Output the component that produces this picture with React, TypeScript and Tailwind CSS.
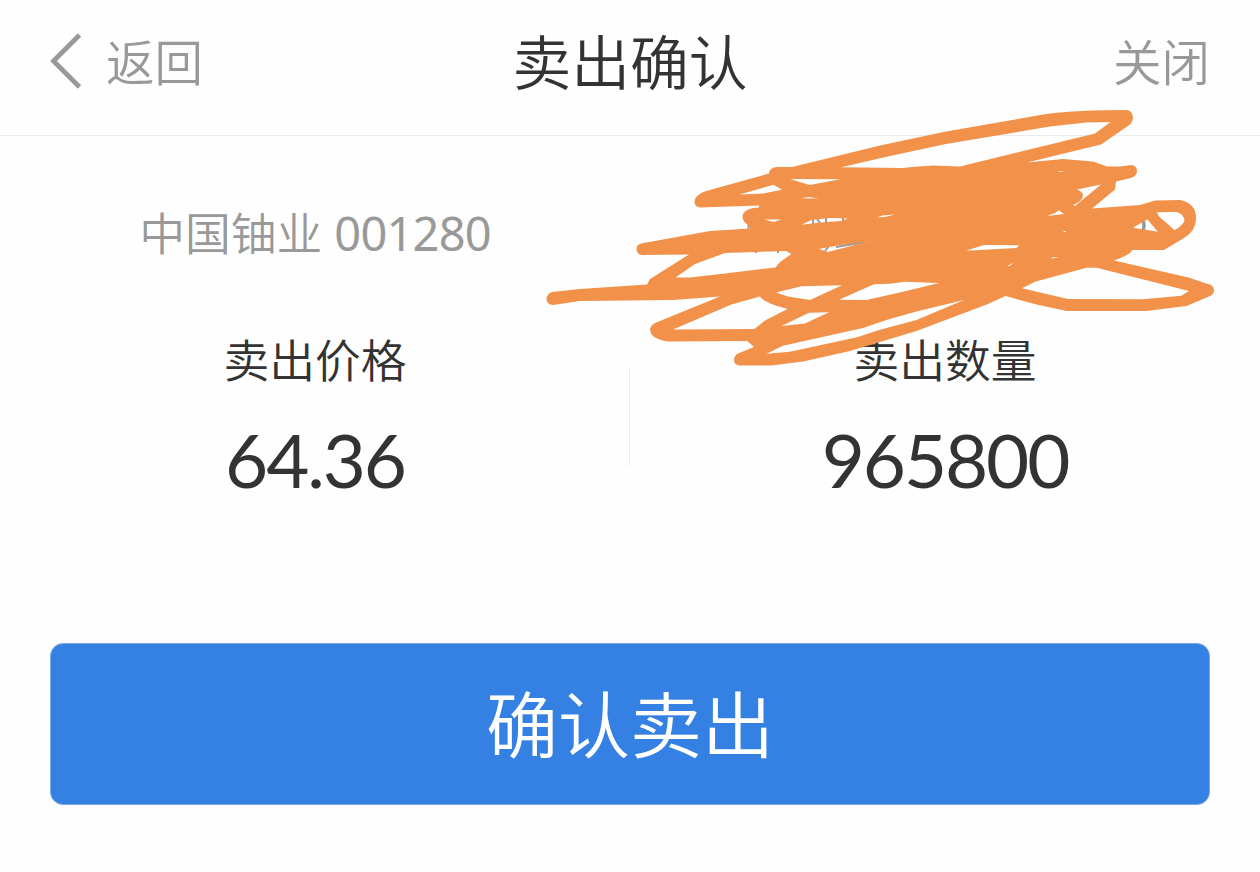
interface TradeFieldProps {
  label: string;
  value: string;
}

const SCRIBBLE_OUTLINE =
  "M694.5 202 Q694.5 195 706 191 L769 173.5 Q770 167 777 167 L792 167 L880 145.5 L946 131.5 L1046 114 Q1078 110 1127 110 Q1133 111 1133 118.5 Q1132 123 1130 124.5 L1101 144.5 L1027 162.5 L1063 159 L1093 161.5 L1107 166.5 L1120 166.5 L1131 165 Q1137 165.5 1137 171 Q1137 176 1131 178 L1116 181.5 L1115 189.5 L1092 208.5 L1140 205 L1155 200.5 L1180 200 Q1196 203 1196 218.5 Q1196 231 1184 238 L1164 250 L1132 250 Q1132 254 1114 260.5 L1188.5 277.5 L1208 284 Q1214 285 1214 290.5 Q1214 294.5 1209 296.5 L1186.5 306 L1146.5 311 L1066.5 311 L1036.5 304.5 L1005.5 296 L988 304 L916.5 331 L880 342 L850 351 L803 361.5 L771.5 365.5 L740 365.5 Q734 365 734 360 Q734 355.5 738 353.5 L754 347 L747 341 L668 341.5 Q650 339 650 329 Q651 325 655 323 L720 296.5 L673 300 L580 301 L553 305 Q546.5 304.5 546.5 299 Q547 293.5 552 292 L580 289 L647 284.5 L650 279 L689 254.5 L641.5 255 Q636.5 254 636.5 249 Q636.5 244.5 641 243.5 L710 231 L750.5 228.5 L748 225 Q742 221 742.5 216 Q744 208 759 207.5 L759 205.5 L700 207.5 Q694.5 206.5 694.5 202 Z";

// Gaps left open between the pen strokes.
const SCRIBBLE_GAPS = [
  "M841 167.3 L890 156 L946 144 L1050 126.5 L1086 122.5 L1110.5 122 L1095 133.5 L960 166.5 L933 165.5 L912 167 L903 168 Z",
  "M739.5 194.5 L773.5 184.7 L782 189.7 L763 193.5 Z",
  "M790 179 L840.5 179.3 L809.5 185 Z",
  "M801.5 198.3 L809 197 L818.5 198.5 Z",
  "M764 219.5 L781.5 219.5 L773.5 222 Z",
  "M801.5 224.7 L811.5 220 L830 218 L848 218.5 L841 221 L820 222.5 Z",
  "M877 217.5 L882 215.5 L895 214.5 L886 216.7 Z",
  "M819 249 L838 245.5 L868 241.5 L828 252 Z",
  "M675.5 277.5 L695 264 L725 253 L786 251 L791.5 254 L780 262 L775.5 267.5 L725 273.5 L690 277.5 Z",
  "M673 329.5 L731.5 304.5 L760 296.5 Q764 303 787.5 309 L765 320.5 L754.5 329 Z",
  "M776 292.5 L801.5 286.3 L842 285.3 L810 300 L788 296.5 Z",
  "M839 299.7 L874 284.3 L890 283.7 L905 281.7 L939 283 L903 291.7 L866.5 300 Z",
  "M781.5 326 L809 312.7 L829 312.3 L805 323.5 Z",
  "M766.5 353.7 L783 345.7 L863 328 L888 319.5 L916.5 311.5 L964 300 L916.5 320 L880 329.7 L857 337.3 L790 351.7 Z",
  "M966 250.7 L984 245 L1019 245.3 L1016.5 248 Z",
  "M1022 288.3 L1035 281.7 L1086.5 267.7 L1096.5 267.7 L1136.5 277.7 L1189 291 L1181.5 295.7 L1143 299.3 L1068 299 Z",
  "M1077 189.5 L1101 184.5 L1075 206 L1073 205 Q1083 201 1083 195 Q1082 191 1077 189.5 Z",
  "M1046.7 216 L1055 213 L1059 210.3 L1064 214 Z",
  "M1133 227.7 L1147.5 219.3 L1152 225 L1158 231.7 Z",
  "M1157 212.3 L1176.5 212 Q1184 214 1184.5 221 Q1182 226 1174.5 230.3 L1165 221.5 Q1158 217 1157 212.3 Z",
  "M1058 172 L1060 171 L1065 171.5 Z",
  "M1007 266 L1015 262 L1009 266 Z",
  "M1050 258.5 L1054 257 L1059 257.5 Z",
  "M1063 231 L1066 231 L1065 232.5 Z",
];

function TradeField({ label, value }: TradeFieldProps) {
  return (
    <div className="flex w-1/2 flex-col items-center">
      <span className="text-[45.8px] leading-[60px] font-[350]">{label}</span>
      <span className="mt-[29px] font-['Lato'] text-[74.5px] leading-[80px] font-normal tracking-[-2.1px]">
        {value}
      </span>
    </div>
  );
}

function Scribble() {
  return (
    <svg
      className="pointer-events-none absolute top-0 left-0"
      width="1260"
      height="872"
      viewBox="0 0 1260 872"
      fill="none"
    >
      {/* bits of the account line that stick out from under the pen */}
      <path
        d="M748.5 224 v5 M756 249 v4 M778 249 v4 M813 218 v6 M817 219 l3 4 M826 217 v7 M843 217 v5 M829 246 l-4 5 M836 247 l29 -5"
        stroke="#999"
        strokeWidth="2"
      />
      <path d="M1142 219 q4 6 0 15" stroke="#999" strokeWidth="3.5" />
      <path
        d={[SCRIBBLE_OUTLINE, ...SCRIBBLE_GAPS].join(" ")}
        fill="#f2924a"
        fillRule="evenodd"
      />
    </svg>
  );
}

export default function App() {
  return (
    <div className="relative h-[872px] w-[1260px] overflow-hidden bg-[#fefefe] font-['Noto_Sans','Noto_Sans_CJK_SC',sans-serif] text-[#333]">
      {/* Header */}
      <header className="flex h-[136px] items-start justify-between border-b border-[#ebebeb] px-[50px] pt-[27px]">
        <button className="flex w-[200px] items-center text-[48.5px] leading-[70px] font-[350] text-[#999]">
          <svg className="-mt-[2px]" width="32" height="56" viewBox="0 0 32 56" fill="none">
            <path d="M29.5 2 L3.5 28 L29.5 54" stroke="#999" strokeWidth="4.8" />
          </svg>
          <span className="ml-[24px]">返回</span>
        </button>
        <h1 className="text-[58.8px] leading-[70px] font-[350]">卖出确认</h1>
        <button className="w-[200px] text-right text-[48.5px] leading-[70px] font-[350] text-[#999]">
          关闭
        </button>
      </header>

      {/* Stock and account */}
      <div className="flex pt-[67px]">
        <p className="w-1/2 text-center text-[45.8px] leading-[60px] font-[350] whitespace-nowrap text-[#999]">
          中国铀业{" "}
          <span className="text-[47px] font-normal tracking-[-0.8px]">001280</span>
        </p>
      </div>

      {/* Price and amount */}
      <div className="mt-[67px] flex items-start">
        <TradeField label="卖出价格" value="64.36" />
        <div className="mt-[38px] -ml-px h-[98px] w-px shrink-0 bg-[#ebebeb]" />
        <TradeField label="卖出数量" value="965800" />
      </div>

      {/* Submit */}
      <div className="mt-[144px] px-[50px]">
        <button className="h-[162px] w-full rounded-[13px] border border-[#79a9e2] bg-[#3481e3] text-[72px] leading-[100px] font-[350] text-white">
          确认卖出
        </button>
      </div>

      <Scribble />
    </div>
  );
}
